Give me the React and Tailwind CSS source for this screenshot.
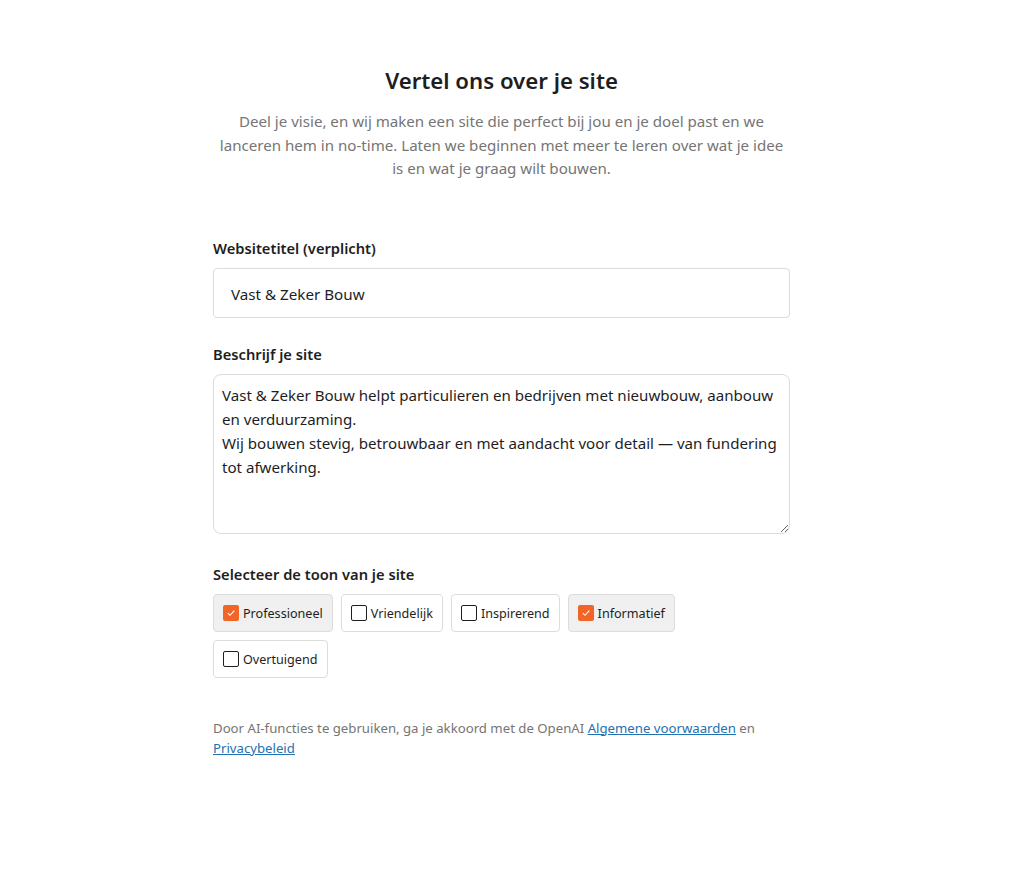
import { useState } from "react";

const tones = ["Professioneel", "Vriendelijk", "Inspirerend", "Informatief", "Overtuigend"];

export default function App() {
  const [title, setTitle] = useState("Vast & Zeker Bouw");
  const [desc, setDesc] = useState(
    "Vast & Zeker Bouw helpt particulieren en bedrijven met nieuwbouw, aanbouw en verduurzaming.\nWij bouwen stevig, betrouwbaar en met aandacht voor detail — van fundering tot afwerking."
  );
  const [selected, setSelected] = useState(["Professioneel", "Informatief"]);

  const toggle = (t) => {
    setSelected(selected.includes(t) ? selected.filter((s) => s !== t) : [...selected, t]);
  };

  return (
    <div className="min-h-[884px] bg-white font-['Noto_Sans',sans-serif] text-[#1e1e1e]">
      <div className="ml-[213px] w-[577px] pt-[64px]">
        <div className="text-center">
          <h1 className="text-[22.2px] leading-[34px] font-semibold">Vertel ons over je site</h1>
          <p className="mt-[12px] px-[4px] text-[15.1px] leading-[23.5px] text-[#757575]">
            Deel je visie, en wij maken een site die perfect bij jou en je doel past en we lanceren hem in no-time. Laten we beginnen met meer te leren over wat je idee is en wat je graag wilt bouwen.
          </p>
        </div>

        <div className="mt-[57px]">
          <label className="block text-[14.7px] leading-[20px] font-semibold">Websitetitel (verplicht)</label>
          <input
            value={title}
            onChange={(e) => setTitle(e.target.value)}
            className="mt-[10px] block h-[50px] w-full rounded-[4px] border border-[#dcdcdc] px-[17px] pt-[2px] text-[15.2px] outline-none"
          />
        </div>

        <div className="mt-[26px]">
          <label className="block text-[14.7px] leading-[20px] font-semibold">Beschrijf je site</label>
          <textarea
            value={desc}
            onChange={(e) => setDesc(e.target.value)}
            className="mt-[10px] block h-[160px] w-full resize-y rounded-[8px] border border-[#dcdcdc] py-[8px] pr-[2px] pl-[8px] text-[15.1px] leading-[24px] outline-none"
          />
        </div>

        <div className="mt-[30px]">
          <label className="block text-[14.7px] leading-[20px] font-semibold">Selecteer de toon van je site</label>
          <div className="mt-[10px] flex flex-wrap gap-[8px]">
            {tones.map((t) => {
              const on = selected.includes(t);
              return (
                <button
                  key={t}
                  onClick={() => toggle(t)}
                  className={
                    "flex h-[38px] items-center gap-[4px] rounded-[4px] border border-[#dcdcdc] px-[9px] text-[12.6px] leading-[18px] " +
                    (on ? "bg-[#f0f0f0]" : "bg-white")
                  }
                >
                  {on ? (
                    <span className="flex h-[16px] w-[16px] items-center justify-center rounded-[2px] bg-[#f26526]">
                      <svg width="10" height="10" viewBox="0 0 10 10" fill="none">
                        <path d="M1.8 5.2 L4 7.3 L8.3 2.7" stroke="white" strokeWidth="1.1" />
                      </svg>
                    </span>
                  ) : (
                    <span className="h-[16px] w-[16px] rounded-[2px] border border-[#1e1e1e] bg-white" />
                  )}
                  <span className="pt-[2px]">{t}</span>
                </button>
              );
            })}
          </div>
        </div>

        <p className="mt-[40px] text-[13.2px] leading-[20px] text-[#757575]">
          Door AI-functies te gebruiken, ga je akkoord met de OpenAI{" "}
          <a href="#" className="text-[#2271b1] underline">Algemene voorwaarden</a> en{" "}
          <a href="#" className="text-[#2271b1] underline">Privacybeleid</a>
        </p>
      </div>
    </div>
  );
}
